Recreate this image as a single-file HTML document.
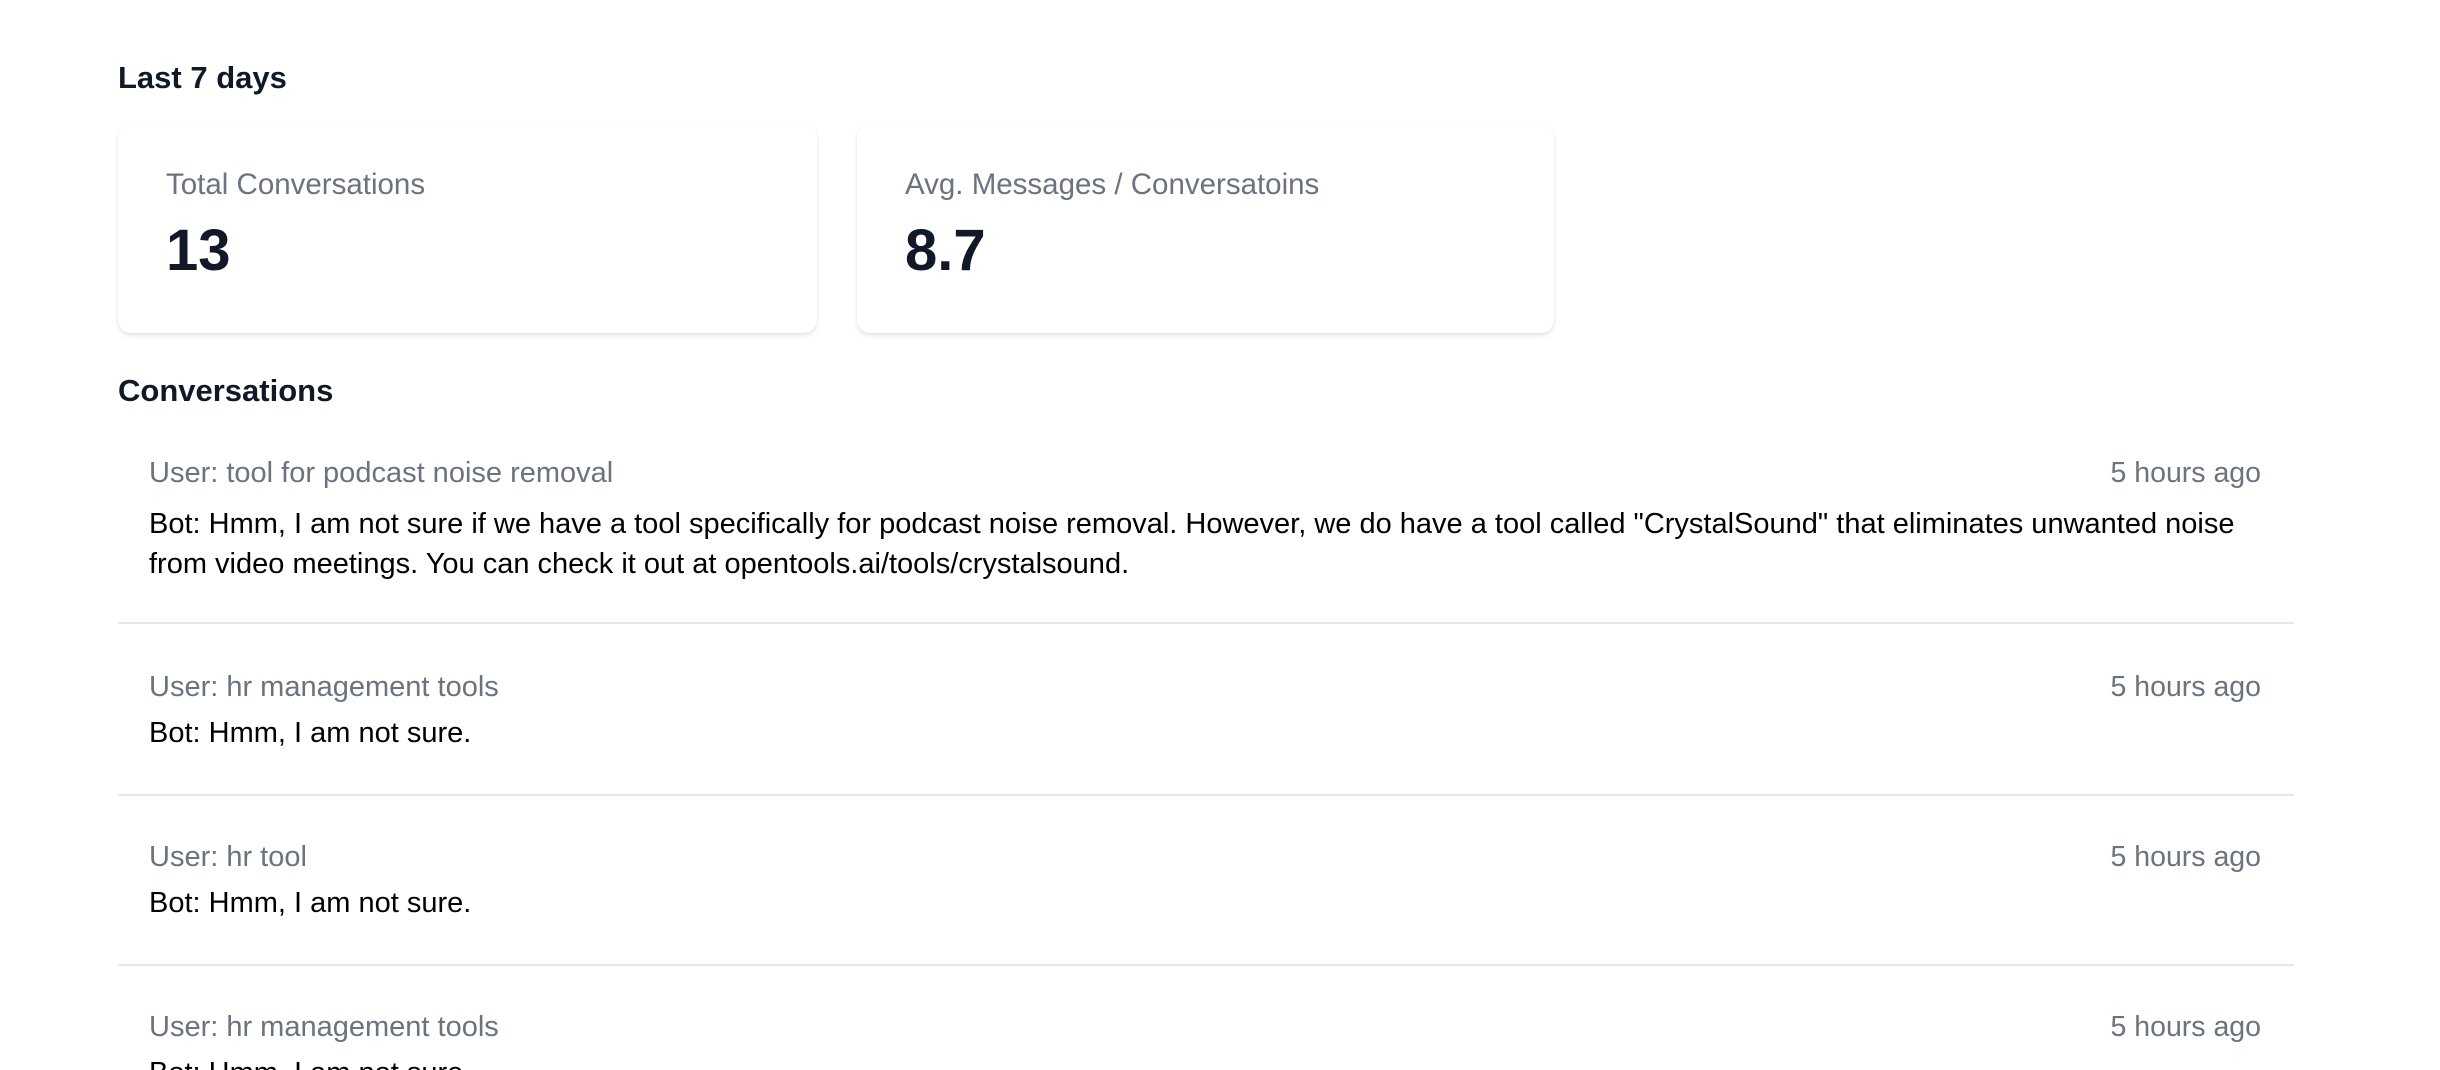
<!DOCTYPE html>
<html><head><meta charset="utf-8"><style>
*{margin:0;padding:0;box-sizing:border-box}
html,body{width:2440px;height:1070px;overflow:hidden}
body{background:#fff;font-family:"Liberation Sans",Arial,sans-serif;position:relative}
.h{position:absolute;left:118px;font-size:31px;font-weight:bold;color:#111827;line-height:40px}
.card{position:absolute;top:124px;height:209px;width:699px;background:#fff;border-radius:13px;box-shadow:0 3px 6px rgba(0,0,0,0.08),0 1px 2px rgba(0,0,0,0.06)}
.card .l{position:absolute;left:48px;top:41px;font-size:29.5px;color:#6b7280;line-height:40px;white-space:nowrap}
.card .n{position:absolute;left:48px;top:96px;font-size:58px;font-weight:bold;color:#111827;line-height:62px}
.row{position:absolute;left:118px;width:2176px;border-bottom:2px solid #e5e7eb;padding:42px 33px 41px 31px}
.top{display:flex;justify-content:space-between;font-size:29px;color:#6b7280;line-height:40px}
.top span+span{font-size:28.5px}
.bot{margin-top:7px;font-size:29px;color:#000;line-height:39px;white-space:nowrap}
.r1{padding-bottom:38px}
.r1 .bot{margin-top:11px;line-height:40px}
</style></head><body>
<div class="h" style="top:58px">Last 7 days</div>
<div class="card" style="left:118px"><div class="l">Total Conversations</div><div class="n">13</div></div>
<div class="card" style="left:857px;width:697px"><div class="l">Avg. Messages / Conversatoins</div><div class="n">8.7</div></div>
<div class="h" style="top:371px">Conversations</div>
<div class="row r1" style="top:411px"><div class="top"><span>User: tool for podcast noise removal</span><span>5 hours ago</span></div><div class="bot">Bot: Hmm, I am not sure if we have a tool specifically for podcast noise removal. However, we do have a tool called "CrystalSound" that eliminates unwanted noise<br>from video meetings. You can check it out at opentools.ai/tools/crystalsound.</div></div>
<div class="row" style="top:625px"><div class="top"><span>User: hr management tools</span><span>5 hours ago</span></div><div class="bot">Bot: Hmm, I am not sure.</div></div>
<div class="row" style="top:795px"><div class="top"><span>User: hr tool</span><span>5 hours ago</span></div><div class="bot">Bot: Hmm, I am not sure.</div></div>
<div class="row" style="top:965px"><div class="top"><span>User: hr management tools</span><span>5 hours ago</span></div><div class="bot">Bot: Hmm, I am not sure.</div></div>
</body></html>
